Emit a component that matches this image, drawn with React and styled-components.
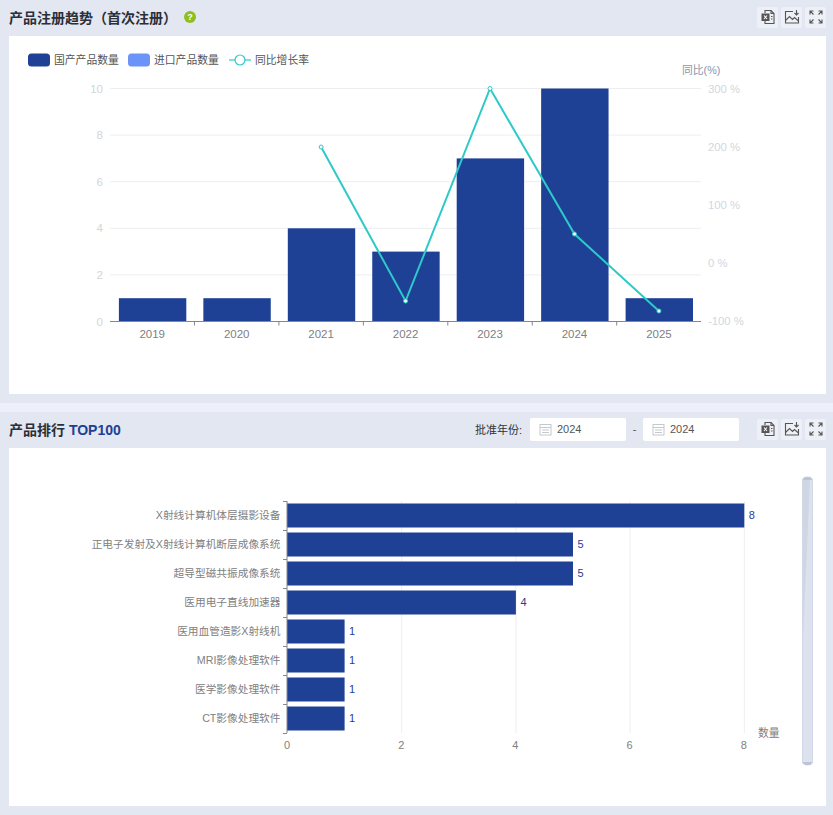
import React from 'react';
import styled, { createGlobalStyle } from 'styled-components';

const FONT = '"Liberation Sans", "Noto Sans CJK SC", sans-serif';

const GlobalStyle = createGlobalStyle`
  html, body {
    margin: 0;
    padding: 0;
    background: #edf0fb;
    font-family: ${FONT};
  }
`;

const Page = styled.div`
  width: 833px;
  height: 815px;
  overflow: hidden;
  display: flex;
  flex-direction: column;
  gap: 9px;
`;

const Panel = styled.section`
  background: #e3e7f2;
  height: 403px;
  padding: 0 7px 0 9px;
  box-sizing: border-box;
  display: flex;
  flex-direction: column;
`;

const Header = styled.header`
  height: 36px;
  padding-bottom: 2px;
  box-sizing: border-box;
  display: flex;
  align-items: center;
  flex-shrink: 0;
`;

const Title = styled.h2`
  margin: 0;
  font-size: 14px;
  font-weight: 700;
  color: #2b2f38;
`;

const Accent = styled.span`
  color: #1d4095;
`;

const Help = styled.span`
  width: 12px;
  height: 12px;
  margin-left: 7px;
  border-radius: 50%;
  background: #8fbf1f;
  color: #fff;
  font-size: 9px;
  font-weight: 700;
  line-height: 12px;
  text-align: center;
`;

const Spacer = styled.div`
  flex: 1;
`;

const FilterLabel = styled.span`
  font-size: 11px;
  color: #333;
  margin-right: 8px;
`;

const DateBox = styled.div`
  width: 96px;
  height: 23px;
  background: #fff;
  border-radius: 2px;
  display: flex;
  align-items: center;
  gap: 5px;
  padding-left: 9px;
  box-sizing: border-box;
  font-size: 11px;
  color: #555;
`;

const Dash = styled.span`
  width: 17px;
  text-align: center;
  font-size: 11px;
  color: #555;
`;

const Tools = styled.div`
  display: flex;
  gap: 3px;
  margin-left: 18px;
`;

const ToolButton = styled.button`
  width: 21px;
  height: 21px;
  padding: 0;
  border: 0;
  border-radius: 2px;
  background: #eef0f7;
  color: #555;
  display: flex;
  align-items: center;
  justify-content: center;
`;

const Card = styled.div`
  background: #fff;
  height: 358px;
  flex-shrink: 0;
`;

const ChartSvg = styled.svg`
  display: block;
  width: 817px;
  height: 358px;
  font-family: ${FONT};
`;

const ExcelIcon = () => (
  <svg width="16" height="16" viewBox="0 0 16 16" fill="none" stroke="currentColor" strokeWidth="1.1">
    <path d="M5 4V1.500h6l3 3v10H5V12" />
    <path d="M11 1.500v3h3M11 7.500h1.500M11 10h1.500" />
    <rect x="1.500" y="4.500" width="8" height="7.500" fill="currentColor" stroke="none" />
    <path d="M4 6.500l3 3.500M7 6.500l-3 3.500" stroke="#fff" />
  </svg>
);

const ImageIcon = () => (
  <svg width="16" height="16" viewBox="0 0 16 16" fill="none" stroke="currentColor" strokeWidth="1.1">
    <path d="M9 2.500H1.500v11.500h13V8" />
    <path d="M1.500 11.500L5.500 7.500l3 3 2-2 4 3.500" />
    <path d="M12.500 1v5M10.500 4l2 2 2-2" />
  </svg>
);

const ExpandIcon = () => (
  <svg width="14" height="14" viewBox="0 0 14 14" fill="none" stroke="currentColor" strokeWidth="1.1">
    <path d="M1 4.500V1h3.500M1 1l3.500 3.500" />
    <path d="M13 4.500V1H9.500M13 1L9.500 4.500" />
    <path d="M1 9.500V13h3.500M1 13l3.500-3.500" />
    <path d="M13 9.500V13H9.500M13 13L9.500 9.500" />
  </svg>
);

const CalendarIcon = () => (
  <svg width="13" height="13" viewBox="0 0 13 13" fill="none" stroke="#c4c8cf" strokeWidth="1">
    <rect x="1" y="1.500" width="11" height="10.500" />
    <path d="M1 4.500h11M3 7h7M3 9.500h7" />
  </svg>
);

const Toolbar = () => (
  <Tools>
    <ToolButton><ExcelIcon /></ToolButton>
    <ToolButton><ImageIcon /></ToolButton>
    <ToolButton><ExpandIcon /></ToolButton>
  </Tools>
);

const years = [2019, 2020, 2021, 2022, 2023, 2024, 2025];
const counts = [1, 1, 4, 3, 7, 10, 1];
const rates = [null, null, 147, 301, 88.5, 234, 311];

const TrendChart = () => {
  const baseY = 321.5;
  const unit = 23.3;
  const left = 110;
  const step = 84.45;
  const points = rates
    .map((y, i) => (y === null ? null : [left + step * i + step / 2, y]))
    .filter(Boolean);

  return (
    <ChartSvg viewBox="9 36 817 358">
      <rect x="28" y="53.500" width="22" height="13" rx="3.500" fill="#1e4196" />
      <text x="54" y="64" fontSize="10.8" fill="#555">国产产品数量</text>
      <rect x="128" y="53.500" width="22" height="13" rx="3.500" fill="#6a94f7" />
      <text x="154" y="64" fontSize="10.8" fill="#555">进口产品数量</text>
      <path d="M229 60h22" stroke="#2ec9c9" strokeWidth="1.200" />
      <circle cx="240" cy="60" r="5" fill="#fff" stroke="#2ec9c9" strokeWidth="1.200" />
      <text x="255" y="64" fontSize="10.8" fill="#555">同比增长率</text>
      <text x="682" y="74" fontSize="10.8" fill="#8896ad">同比(%)</text>

      {[0, 2, 4, 6, 8, 10].map((v) => {
        const y = baseY - v * unit;
        return (
          <g key={v}>
            {v > 0 && <path d={`M110 ${y}H701`} stroke="#eceef1" />}
            <text x="103" y={y + 4} fontSize="11.5" textAnchor="end" fill="#d3d6da">{v}</text>
          </g>
        );
      })}
      {['300 %', '200 %', '100 %', '0 %', '-100 %'].map((t, i) => (
        <text key={t} x="708" y={92.5 + i * 58.2} fontSize="11.3" fill="#d0d7e1">{t}</text>
      ))}

      {counts.map((c, i) => (
        <rect key={years[i]} x={left + step * i + 8.9} y={baseY - c * unit} width="67.4" height={c * unit} fill="#1e4196" />
      ))}

      <path d="M110 321.500H701" stroke="#85878f" />
      {years.slice(1).map((_, i) => (
        <path key={i} d={`M${left + step * (i + 1)} 321.500v4`} stroke="#85878f" />
      ))}
      {years.map((y, i) => (
        <text key={y} x={left + step * i + step / 2} y="337.5" fontSize="11.5" textAnchor="middle" fill="#808080">{y}</text>
      ))}

      <polyline points={points.map((p) => p.join(',')).join(' ')} fill="none" stroke="#2ec9c9" strokeWidth="2" />
      {points.map((p) => (
        <circle key={p[0]} cx={p[0]} cy={p[1]} r="2" fill="#fff" stroke="#2ec9c9" />
      ))}
    </ChartSvg>
  );
};

const products = [
  ['X射线计算机体层摄影设备', 8],
  ['正电子发射及X射线计算机断层成像系统', 5],
  ['超导型磁共振成像系统', 5],
  ['医用电子直线加速器', 4],
  ['医用血管造影X射线机', 1],
  ['MRI影像处理软件', 1],
  ['医学影像处理软件', 1],
  ['CT影像处理软件', 1],
];

const RankChart = () => {
  const x0 = 287;
  const unit = 57.1;
  const top = 501;
  const row = 29;

  return (
    <ChartSvg viewBox="9 448 817 358">
      {[2, 4, 6, 8].map((v) => (
        <path key={v} d={`M${x0 + v * unit + 0.5} ${top}V733`} stroke="#eceef1" />
      ))}
      {products.map(([name, n], i) => (
        <g key={name}>
          <rect x={x0} y={top + row * i + 2.5} width={n * unit + 0.5} height="24" fill="#1e4196" />
          <text x="280.5" y={top + row * i + 18} fontSize="10.7" textAnchor="end" fill="#808080">{name}</text>
          <text x={x0 + n * unit + 5} y={top + row * i + 18} fontSize="11" fill="#1e4196">{n}</text>
        </g>
      ))}
      <path d={`M${x0} ${top}V733`} stroke="#85878f" />
      {[...products, 0].map((_, i) => (
        <path key={i} d={`M283 ${top + row * i + 0.5}h4`} stroke="#85878f" />
      ))}
      {[0, 2, 4, 6, 8].map((v) => (
        <text key={v} x={x0 + v * unit} y="749" fontSize="11" textAnchor="middle" fill="#808080">{v}</text>
      ))}
      <text x="758" y="737" fontSize="10.8" fill="#808080">数量</text>

      <path d="M802.500 480q0-3 5-3t5 3v282q0 3-5 3t-5-3z" fill="#dde2ee" stroke="#d2d9e6" />
      <path d="M810 480L803 640V480z" fill="#cfd6e4" />
      <path d="M803 480q0-3 4.500-3t4.500 3z" fill="#bcc4d3" />
      <path d="M803 762q0 3 4.500 3t4.500-3z" fill="#bcc4d3" />
    </ChartSvg>
  );
};

export default function App() {
  return (
    <Page>
      <GlobalStyle />
      <Panel>
        <Header>
          <Title>产品注册趋势（首次注册）</Title>
          <Help>?</Help>
          <Spacer />
          <Toolbar />
        </Header>
        <Card><TrendChart /></Card>
      </Panel>
      <Panel>
        <Header>
          <Title>产品排行 <Accent>TOP100</Accent></Title>
          <Spacer />
          <FilterLabel>批准年份:</FilterLabel>
          <DateBox><CalendarIcon />2024</DateBox>
          <Dash>-</Dash>
          <DateBox><CalendarIcon />2024</DateBox>
          <Toolbar />
        </Header>
        <Card><RankChart /></Card>
      </Panel>
    </Page>
  );
}
